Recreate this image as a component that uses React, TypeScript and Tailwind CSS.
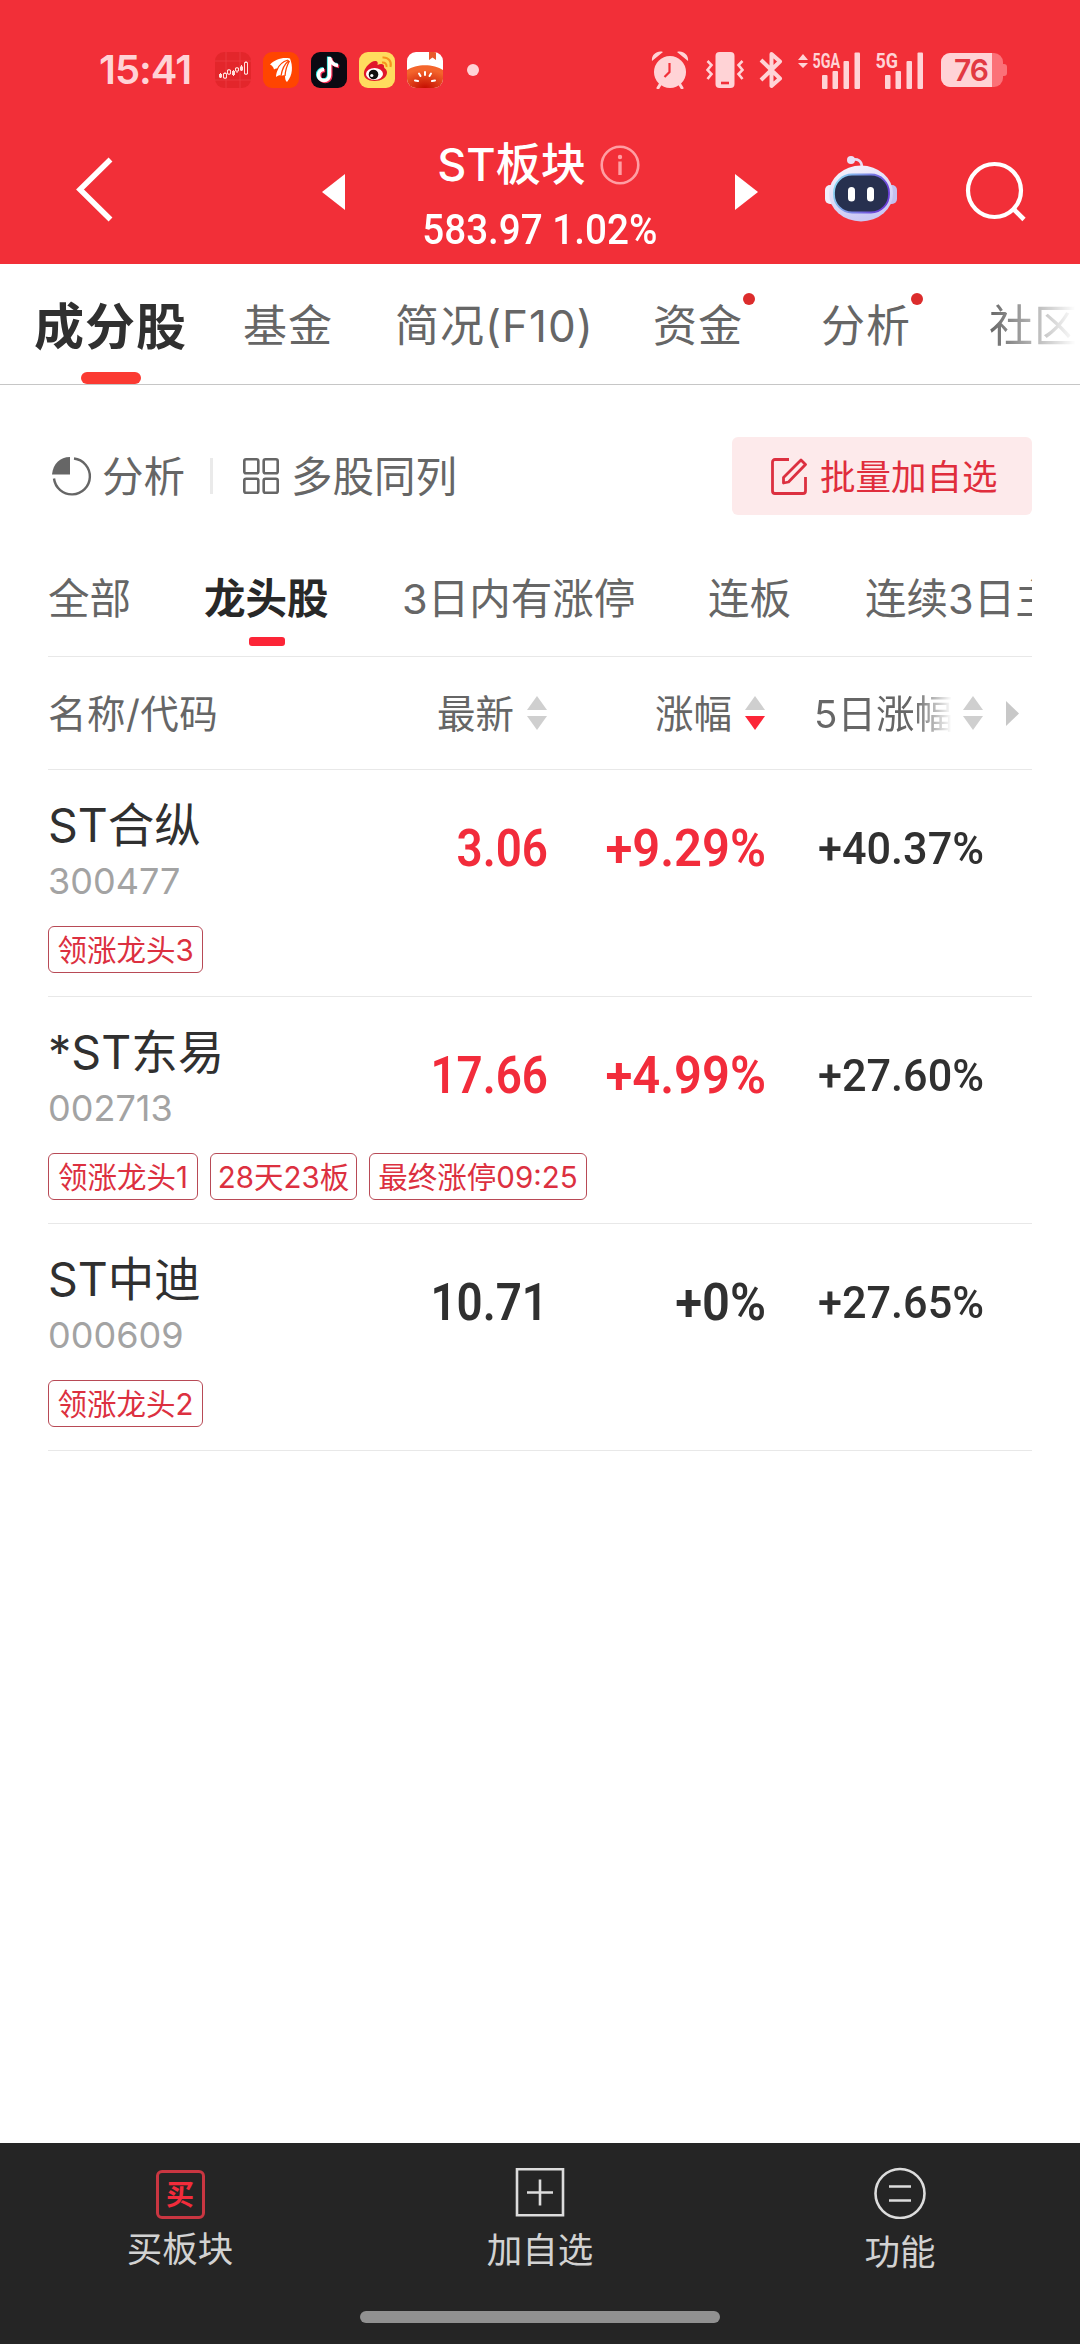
import { ReactNode } from "react";
import clsx from "clsx";

type Stock = {
  name: string;
  code: string;
  price: string;
  change: string;
  fiveDay: string;
  up: boolean;
  tags: { label: string; width: string }[];
};

const stocks: Stock[] = [
  {
    name: "ST合纵",
    code: "300477",
    price: "3.06",
    change: "+9.29%",
    fiveDay: "+40.37%",
    up: true,
    tags: [{ label: "领涨龙头3", width: "w-[155px]" }],
  },
  {
    name: "*ST东易",
    code: "002713",
    price: "17.66",
    change: "+4.99%",
    fiveDay: "+27.60%",
    up: true,
    tags: [
      { label: "领涨龙头1", width: "w-[150px]" },
      { label: "28天23板", width: "w-[147px]" },
      { label: "最终涨停09:25", width: "w-[218px]" },
    ],
  },
  {
    name: "ST中迪",
    code: "000609",
    price: "10.71",
    change: "+0%",
    fiveDay: "+27.65%",
    up: false,
    tags: [{ label: "领涨龙头2", width: "w-[155px]" }],
  },
];

const tabs = [
  { label: "基金", width: "w-[152px]", dot: false },
  { label: "简况(F10)", width: "w-[258px]", dot: false },
  { label: "资金", width: "w-[168px]", dot: true },
  { label: "分析", width: "w-[168px]", dot: true },
  { label: "社区", width: "w-[91px] mask-r-from-0% mask-r-to-95%", dot: false },
];

const AppIcons = () => (
  <div className="flex gap-3 ml-[26px]">
    <svg width="36" height="36" viewBox="0 0 36 36">
      <rect width="36" height="36" rx="9" fill="#e3262b" />
      <path d="M0 9h36M0 28h36M11 0v36M25 0v36" stroke="#ec4146" strokeWidth="0.7" />
      <path d="M5.500 21v5M10 20v7M14 17v6M18.500 18v6M22 15v6M26.500 13v6M31 9v14" stroke="#ffe0dc" strokeWidth="1" />
      <path d="M4 22h3v3.500H4zM17 19h3v4h-3zM25 14.500h3v4h-3z" fill="#ffe0dc" />
      <path d="M8.500 21.500h3V26h-3zM12.500 18h3v4h-3zM20.500 16h3v3h-3zM29.500 10.500h3V22h-3z" fill="#e3262b" stroke="#ffe0dc" />
    </svg>
    <svg width="36" height="36" viewBox="0 0 36 36">
      <rect width="36" height="36" rx="9" fill="#ff4500" />
      <path
        d="M7 12.500C12 7.500 19 5 27 6.500 30 14 30 23 24 30c-1.500-1-2-3-2-6.500-1.500-.5-2.500-.3-3.500.5-1.200-1.200-3-.8-5.500 1 0-3 1-5.500 2-8-1.500-1-2.500-.3-4 .5C10.500 15 9 13.500 7 12.500z"
        fill="#fff"
      />
      <path d="M25 8c-5 1.500-9 4.500-11 10M26 8.500c-4.500 3.500-7 8.500-8 15.500M26.500 9c-2.500 4-4 8.500-4.500 15" fill="none" stroke="#ff4500" strokeWidth="1.300" />
    </svg>
    <svg width="36" height="36" viewBox="0 0 36 36">
      <rect width="36" height="36" rx="9" fill="#0b0912" />
      <g fill="none" strokeWidth="3.600">
        <path d="M18.500 5v18a5.500 5.500 0 1 1-5.500-5.500M18.500 5.500c1 5 4 7.500 8.500 8" stroke="#25e8e2" transform="translate(-.8 -.6)" />
        <path d="M18.500 5v18a5.500 5.500 0 1 1-5.500-5.500M18.500 5.500c1 5 4 7.500 8.500 8" stroke="#f72f58" transform="translate(1.200 1)" />
        <path d="M18.500 5v18a5.500 5.500 0 1 1-5.500-5.500M18.500 5.500c1 5 4 7.500 8.500 8" stroke="#fff" />
      </g>
    </svg>
    <svg width="36" height="36" viewBox="0 0 36 36">
      <rect width="36" height="36" rx="9" fill="#ffdc5e" />
      <path d="M5 20c1-5 7-11 11-11 3 0 3 2 2.500 4 3-1.500 7-1.500 6.500 2 0 1.500 3 2 3 5.500 0 5-6 8.500-12.500 8.500S4 26 5 20z" fill="#e1162c" />
      <ellipse cx="15.500" cy="22" rx="8.500" ry="6" fill="#fff" />
      <circle cx="14.500" cy="22.500" r="4.800" fill="#111" />
      <circle cx="12.800" cy="23.500" r="1.600" fill="#fff" />
      <path d="M23 10.500c3-.5 5 1.500 4.500 4.500M23.500 5.500c6-.5 9.500 4 8 9.500" fill="none" stroke="#f7941e" strokeWidth="2" />
    </svg>
    <svg width="36" height="36" viewBox="0 0 36 36">
      <defs>
        <clipPath id="novel">
          <rect width="36" height="36" rx="9" />
        </clipPath>
        <radialGradient id="tomato" cx="0.5" cy="1" r="0.8">
          <stop offset="0" stopColor="#c40d00" />
          <stop offset="1" stopColor="#f4652c" />
        </radialGradient>
      </defs>
      <g clipPath="url(#novel)">
        <rect width="36" height="36" fill="#fff" />
        <path d="M22 0h7v8l-3.500-2.500L22 8z" fill="#e85a2c" />
        <path d="M0 18c9-6.500 27-6.500 36 0v18H0z" fill="url(#tomato)" />
        <path d="M18 20v3M12 21.500l1.500 2.500M24 21.500L22.500 24M8 28.500l3 .5M28 28.500l-3 .5" stroke="#fff" strokeWidth="2" strokeLinecap="round" />
      </g>
    </svg>
  </div>
);

const Signal = ({ label, wide }: { label: string; wide?: boolean }) => (
  <svg
    className="overflow-visible"
    width={wide ? 63 : 48}
    height="38"
    viewBox={wide ? "0 0 63 38" : "15 0 48 38"}
    fill="#ffd3d6"
  >
    {wide && <path d="M0 9l5-6 5 6zM0 12l5 5 5-5z" />}
    <text
      x="14.500"
      y="16.500"
      fontFamily="Roboto, sans-serif"
      fontSize="21"
      fontWeight="700"
      textLength={wide ? 27.5 : 22.5}
      lengthAdjust="spacingAndGlyphs"
    >
      {label}
    </text>
    <rect x="24" y="24" width="5.500" height="14" rx="1" />
    <rect x="34.500" y="20" width="5.500" height="18" rx="1" />
    <rect x="45.500" y="10" width="5.500" height="28" rx="1" />
    <rect x="56.500" y="1.500" width="5.500" height="36.500" rx="1" />
  </svg>
);

const StatusBar = () => (
  <div className="flex items-center h-[140px] pl-[99px] pr-[73px]">
    <span className="w-[90px] text-[40px] font-semibold tracking-[-1px] text-[#ffd3d6] whitespace-nowrap">
      15:41
    </span>
    <AppIcons />
    <div className="w-3 h-3 rounded-full bg-[#ffd3d6] ml-6" />
    <div className="flex items-center ml-auto">
      <svg width="38" height="38" viewBox="0 0 38 38" fill="#ffd3d6">
        <circle cx="19" cy="21" r="16" />
        <path d="M1 10C0 4 6-1 12 1zM37 10c1-6-5-11-11-9z" />
        <path d="M10 32l-3 5M28 32l3 5" stroke="#ffd3d6" strokeWidth="3" strokeLinecap="round" />
        <path d="M18.500 12v9l-5 5" fill="none" stroke="#f22f38" strokeWidth="2.200" />
      </svg>
      <svg className="ml-[17px]" width="38" height="38" viewBox="0 0 38 38" fill="none" stroke="#ffd3d6" strokeWidth="2.600">
        <rect x="9.500" y="1" width="19" height="36" rx="4" fill="#ffd3d6" stroke="none" />
        <path d="M15 32h8" stroke="#f22f38" />
        <path d="M1.500 10l4 4-4 5 4 4-4 5M36.500 10l-4 4 4 5-4 4 4 5" />
      </svg>
      <svg className="ml-[14px]" width="26" height="38" viewBox="0 0 26 38" fill="none" stroke="#ffd3d6" strokeWidth="4">
        <path d="M3 9l19 18.500-8.500 7.500V3l8.500 7.500L3 29" strokeLinejoin="round" />
      </svg>
      <div className="ml-[14px] flex gap-[15px]">
        <Signal label="5GA" wide />
        <Signal label="5G" />
      </div>
      <div className="flex items-center ml-[17px]">
        <div className="relative w-[62px] h-[34px] rounded-[9px] overflow-hidden bg-[#fb7178]">
          <div className="w-[51px] h-full bg-[#ffd3d6]" />
          <span className="absolute left-[13px] top-0 leading-[35px] text-[30px] font-semibold tracking-[-1px] text-[#e23842]">
            76
          </span>
        </div>
        <div className="w-[4px] h-[12px] rounded-r-[3px] bg-[#fb7178]" />
      </div>
    </div>
  </div>
);

const Robot = () => (
  <svg className="ml-[67px]" width="72" height="68" viewBox="0 0 72 68">
    <defs>
      <linearGradient id="shell" x1="0" y1="0" x2="0.4" y2="1">
        <stop offset="0" stopColor="#fbf7fd" />
        <stop offset="1" stopColor="#c9c8f4" />
      </linearGradient>
      <linearGradient id="rim" x1="0" y1="0" x2="1" y2="0.3">
        <stop offset="0" stopColor="#8fe3f5" />
        <stop offset="1" stopColor="#6a3fd8" />
      </linearGradient>
    </defs>
    <path d="M26 5c7-2 11 1 11 8" fill="none" stroke="#e9dcf3" strokeWidth="2.600" />
    <circle cx="26" cy="5" r="4" fill="#e9e0f6" />
    <rect x="0" y="30" width="11" height="19" rx="5" fill="#f1eefb" />
    <rect x="61" y="30" width="11" height="19" rx="5" fill="#c4c0ee" />
    <ellipse cx="36" cy="38.500" rx="32" ry="28" fill="url(#shell)" />
    <rect x="9" y="19.500" width="55" height="38" rx="18" fill="#27304f" stroke="url(#rim)" strokeWidth="1.800" />
    <rect x="23" y="32" width="7" height="14.500" rx="3.500" fill="#fff" />
    <rect x="42" y="32" width="7" height="14.500" rx="3.500" fill="#fff" />
  </svg>
);

const NavBar = () => (
  <div className="flex h-[124px] pl-[76px] text-white">
    <svg className="mt-4" width="40" height="68" viewBox="0 0 40 68" fill="none" stroke="#fff" strokeWidth="5.500">
      <path d="M34.500 3.500L4 33.500l30.500 30" />
    </svg>
    <svg className="ml-[206px] mt-[34px]" width="23" height="36" viewBox="0 0 23 36" fill="#fff">
      <path d="M0 18L23 0v36z" />
    </svg>
    <div className="w-[390px] flex flex-col items-center">
      <div className="flex items-center mt-[-4px] pr-[3px]">
        <span className="text-[45px] leading-[58px] font-medium whitespace-nowrap">ST板块</span>
        <svg className="ml-[14px]" width="40" height="40" viewBox="0 0 40 40" fill="none" stroke="#ff9ea3" strokeWidth="2.600">
          <circle cx="20" cy="20" r="18.300" />
          <path d="M20 16.500V30" strokeWidth="3.400" />
          <circle cx="20" cy="12" r="2.200" fill="#ff9ea3" stroke="none" />
        </svg>
      </div>
      <span className="font-[Roboto,sans-serif] text-[42px] leading-[56px] mt-2 font-medium scale-x-[0.92] whitespace-nowrap">
        583.97 1.02%
      </span>
    </div>
    <svg className="mt-[34px]" width="23" height="36" viewBox="0 0 23 36" fill="#fff">
      <path d="M23 18L0 0v36z" />
    </svg>
    <div className="mt-[15px]">
      <Robot />
    </div>
    <svg className="ml-[68px] mt-[21px]" width="62" height="62" viewBox="0 0 62 62" fill="none" stroke="#fff" strokeWidth="4.200">
      <circle cx="29.500" cy="29.500" r="26.500" />
      <path d="M48 47.500l11 11" strokeWidth="4.600" />
    </svg>
  </div>
);

const SortArrows = ({ active }: { active?: boolean }) => (
  <svg className="shrink-0" width="20" height="34" viewBox="0 0 20 34" fill="#cfcfcf">
    <path d="M10 0l10 14H0z" />
    <path d="M0 20h20L10 34z" fill={active ? "#fc2537" : "#cfcfcf"} />
  </svg>
);

const StockRow = ({ stock }: { stock: Stock }) => (
  <div className="flex h-[227px] border-b border-[#e8e8e8] text-[#303030]">
    <div className="w-[340px] pt-[27px]">
      <p className="text-[46.500px] leading-[56px] whitespace-nowrap">{stock.name}</p>
      <p className="text-[36px] leading-[40px] mt-2 text-[#a3a3a3]">{stock.code}</p>
      <div className="flex gap-3 mt-[25px]">
        {stock.tags.map((tag) => (
          <span
            key={tag.label}
            className={clsx(
              "h-[47px] leading-[46px] shrink-0 text-center border border-[#b84a56] rounded-md text-[29.500px] text-[#dc3040] whitespace-nowrap",
              tag.width
            )}
          >
            {tag.label}
          </span>
        ))}
      </div>
    </div>
    <div
      className={clsx(
        "flex font-[Roboto,sans-serif] text-[52px] leading-[60px] pt-[49px] font-semibold",
        stock.up && "text-[#f22c3b]"
      )}
    >
      <span className="w-[160px] text-right origin-right scale-x-[0.88]">{stock.price}</span>
      <span className="w-[218px] text-right origin-right scale-x-[0.94]">{stock.change}</span>
    </div>
    <span className="w-[218px] pt-[49px] text-right origin-right scale-x-[0.96] font-[Roboto,sans-serif] text-[45px] leading-[60px] font-medium">
      {stock.fiveDay}
    </span>
  </div>
);

const BottomItem = ({ icon, label }: { icon: ReactNode; label: string }) => (
  <div className="flex flex-col items-center flex-1 pt-6">
    {icon}
    <span className="text-[35.500px] leading-[50px] mt-[9px] text-[#d2d2d2]">{label}</span>
  </div>
);

const App = () => {
  return (
    <div className="w-[1080px] h-[2344px] flex flex-col overflow-hidden bg-white font-[Inter,'Noto_Sans_CJK_SC',sans-serif]">
      <header className="bg-[#f22f38] h-[264px]">
        <StatusBar />
        <NavBar />
      </header>

      <nav className="flex h-[121px] shrink-0 border-b border-[#c6c6c6] pl-[33px] overflow-hidden">
        <div className="w-[210px] shrink-0 flex flex-col justify-between">
          <span className="text-[50px] leading-[126px] h-[108px] tracking-[1px] ml-px font-bold text-[#303030]">成分股</span>
          <div className="w-[60px] h-3 ml-12 rounded-full bg-[#fb3a32]" />
        </div>
        {tabs.map((tab) => (
          <div key={tab.label} className={clsx("shrink-0", tab.width)}>
            <span className="relative text-[44px] leading-[125px] tracking-[1px] text-[#666] whitespace-nowrap">
              {tab.label}
              {tab.dot && <i className="absolute right-[-12px] top-[-6px] w-3 h-3 rounded-full bg-[#dc2c2c]" />}
            </span>
          </div>
        ))}
      </nav>

      <main className="flex-1 px-12">
        <div className="flex items-center h-[78px] mt-[52px] text-[41.500px] text-[#666]">
          <svg className="ml-1" width="40" height="40" viewBox="0 0 40 40">
            <path d="M18 18.500H0C1 8 8 1 18 1z" fill="#666" />
            <path d="M22 2.500A18 18 0 1 1 2 22.500" fill="none" stroke="#666" strokeWidth="2.400" />
          </svg>
          <span className="ml-[10px] w-[84px] pt-[3px]">分析</span>
          <div className="w-[3px] h-9 ml-6 bg-[#eaeaea]" />
          <svg className="ml-[30px]" width="36" height="36" viewBox="0 0 36 36" fill="none" stroke="#666" strokeWidth="2.600">
            <rect x="1.300" y="1.300" width="14" height="14" rx="1.800" />
            <rect x="20.700" y="1.300" width="14" height="14" rx="1.800" />
            <rect x="1.300" y="20.700" width="14" height="14" rx="1.800" />
            <rect x="20.700" y="20.700" width="14" height="14" rx="1.800" />
          </svg>
          <span className="ml-[12px] pt-[3px]">多股同列</span>
          <button
            type="button"
            className="flex items-center w-[300px] h-[78px] ml-auto pl-[39px] rounded-md bg-[#fdeaeb] text-[#e02d3c] text-[35.500px]"
          >
            <svg width="36" height="37" viewBox="0 0 36 37" fill="none" stroke="#dc3040" strokeWidth="2.800">
              <path d="M18 1.500H4A2.500 2.500 0 0 0 1.500 4v29A2.500 2.500 0 0 0 4 35.500h28a2.500 2.500 0 0 0 2.500-2.500V19" />
              <path d="M12.500 25v-5.500L30 2l4.500 4.500L17.500 24z" strokeLinejoin="round" />
            </svg>
            <span className="ml-[13px] pt-[3px]">批量加自选</span>
          </button>
        </div>

        <div className="flex h-[142px] border-b border-[#e8e8e8] text-[41.500px] leading-[168px] text-[#666] whitespace-nowrap overflow-hidden">
          <span className="w-[156px] shrink-0">全部</span>
          <div className="w-[198px] shrink-0 flex flex-col">
            <span className="h-[122px] font-bold text-[#282828]">龙头股</span>
            <div className="w-9 h-[9px] ml-[45px] rounded-[3px] bg-[#fc2537]" />
          </div>
          <span className="w-[306px] shrink-0">3日内有涨停</span>
          <span className="w-[157px] shrink-0">连板</span>
          <span>连续3日主</span>
        </div>

        <div className="flex items-center h-[113px] border-b border-[#e8e8e8] text-[38.500px] text-[#666] whitespace-nowrap">
          <span className="w-[389px] pt-[3px] tracking-[0.500px]">名称/代码</span>
          <span className="w-[90px] pt-[3px]">最新</span>
          <SortArrows />
          <span className="w-[90px] ml-[108px] pt-[3px]">涨幅</span>
          <SortArrows active />
          <span className="w-[140px] ml-[49px] mr-[9px] pt-[3px] overflow-hidden mask-r-from-[100px] mask-r-to-[138px]">5日涨幅</span>
          <SortArrows />
          <svg className="ml-[23px] shrink-0" width="13" height="25" viewBox="0 0 13 25" fill="#c8c8c8">
            <path d="M0 0l13 12.500L0 25z" />
          </svg>
        </div>

        {stocks.map((stock) => (
          <StockRow key={stock.code} stock={stock} />
        ))}
      </main>

      <footer className="bg-[#252525] h-[201px] flex flex-col">
        <div className="flex">
          <BottomItem
            label="买板块"
            icon={
              <div className="w-[49px] h-[49px] mt-[3px] mb-[-3px] flex items-center justify-center border-3 border-[#c93641] rounded-md text-[28px] leading-none font-bold text-[#f22c3b]">
                买
              </div>
            }
          />
          <BottomItem
            label="加自选"
            icon={
              <svg width="50" height="50" viewBox="0 0 50 50" fill="none" stroke="#dcdcdc" strokeWidth="2.600">
                <path d="M2 2.300h46v46H2zM25 12.500v26M12 25.500h26" />
              </svg>
            }
          />
          <BottomItem
            label="功能"
            icon={
              <svg width="52" height="52" viewBox="0 0 52 52" fill="none" stroke="#dcdcdc" strokeWidth="2.600">
                <circle cx="26" cy="26.500" r="24.500" />
                <path d="M15 19.500h22M15 33.500h22" />
              </svg>
            }
          />
        </div>
        <div className="w-[360px] h-3 mx-auto mt-auto mb-[21px] rounded-full bg-[#919191]" />
      </footer>
    </div>
  );
};

export default App;
